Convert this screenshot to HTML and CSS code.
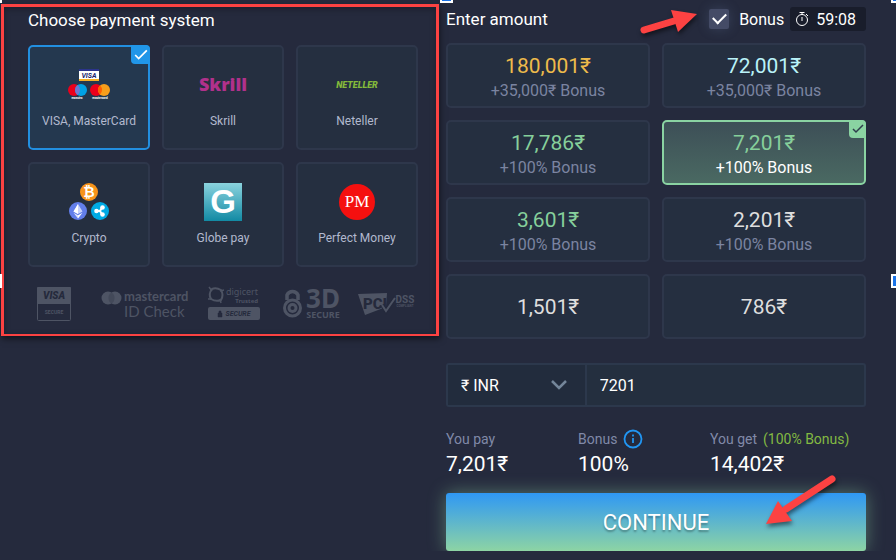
FILE: index.html
```
<!DOCTYPE html>
<html lang="en">
<head>
    <meta charset="utf-8">
    <title>Deposit</title>
    <link rel="stylesheet" href="styles.css">
</head>
<body>
    <span class="handle top-left"></span>
    <span class="handle top-center"></span>
    <span class="handle top-right"></span>
    <span class="handle middle-left"></span>
    <span class="handle middle-right"></span>

    <form class="deposit">
        <section class="payment">
            <h1>Choose payment system</h1>

            <div class="systems">
                <label class="system">
                    <input type="radio" name="system" value="card" checked>
                    <svg class="logo" width="44" height="40" viewBox="0 0 44 40">
                        <rect x="12" y="4" width="20" height="12" fill="#fff"/>
                        <rect x="12" y="4" width="20" height="2" fill="#2b348c"/>
                        <rect x="12" y="14" width="20" height="2" fill="#f5b027"/>
                        <text x="22" y="13" class="visa-text">VISA</text>
                        <circle cx="7" cy="25" r="6" fill="#eb001b"/>
                        <circle cx="14" cy="25" r="6" fill="#00a2e5"/>
                        <path d="M10.500 20.100a6 6 0 0 1 0 9.800a6 6 0 0 1 0-9.800z" fill="#7375cf"/>
                        <circle cx="29" cy="25" r="6" fill="#eb001b"/>
                        <circle cx="37" cy="25" r="6" fill="#f79e1b"/>
                        <path d="M33 20.500a6 6 0 0 1 0 9a6 6 0 0 1 0-9z" fill="#ff5f00"/>
                        <text x="10" y="34" class="tiny-text">maestro</text>
                        <text x="33" y="34" class="tiny-text">mastercard</text>
                    </svg>
                    <span>VISA, MasterCard</span>
                    <span class="tick"><svg width="14" height="12" viewBox="0 0 12 10"><path d="M1 5l3 3 7-7"/></svg></span>
                </label>
                <label class="system">
                    <input type="radio" name="system" value="skrill">
                    <svg class="logo" width="48" height="40" viewBox="0 0 48 40">
                        <text x="24" y="26" class="skrill-text">Skrill</text>
                    </svg>
                    <span>Skrill</span>
                </label>
                <label class="system">
                    <input type="radio" name="system" value="neteller">
                    <svg class="logo" width="48" height="40" viewBox="0 0 48 40">
                        <text x="24" y="23" class="neteller-text">NETELLER</text>
                    </svg>
                    <span>Neteller</span>
                </label>
                <label class="system">
                    <input type="radio" name="system" value="crypto">
                    <svg class="logo" width="44" height="40" viewBox="0 0 44 40">
                        <circle cx="22" cy="10" r="9" fill="#f7931a"/>
                        <text x="22" y="15" class="btc-text">₿</text>
                        <circle cx="11" cy="29" r="9" fill="#627eea"/>
                        <path d="M11 22l4.500 7.500-4.500 2.500-4.500-2.500z" fill="#c9d3fa"/>
                        <path d="M11 22v10l-4.500-2.500zM11 33.200l4.500-2.500L11 36.500z" fill="#fff"/>
                        <path d="M11 33.200l-4.500-2.500L11 36.500z" fill="#e4e9fd"/>
                        <circle cx="33" cy="29" r="9" fill="#00aae4"/>
                        <path d="M30 29h3l2-3.500M33 29l2 3.500" stroke="#fff" stroke-width="2" fill="none"/>
                        <circle cx="29.500" cy="29" r="2.300" fill="#fff"/>
                        <circle cx="35.500" cy="25.500" r="2.300" fill="#fff"/>
                        <circle cx="35.500" cy="32.500" r="2.300" fill="#fff"/>
                    </svg>
                    <span>Crypto</span>
                </label>
                <label class="system">
                    <input type="radio" name="system" value="globe">
                    <svg class="logo" width="38" height="40" viewBox="0 0 38 40">
                        <defs>
                            <linearGradient id="globe" x2="0" y2="1">
                                <stop offset="0" stop-color="#8bd3de"/>
                                <stop offset="1" stop-color="#128aa4"/>
                            </linearGradient>
                        </defs>
                        <rect y="1" width="38" height="38" fill="url(#globe)"/>
                        <text x="19" y="31" class="globe-text">G</text>
                    </svg>
                    <span>Globe pay</span>
                </label>
                <label class="system">
                    <input type="radio" name="system" value="perfect">
                    <svg class="logo" width="36" height="40" viewBox="0 0 36 40">
                        <circle cx="18" cy="20" r="18" fill="#f5100f"/>
                        <text x="18" y="25" class="pm-text">PM</text>
                    </svg>
                    <span>Perfect Money</span>
                </label>
            </div>

            <div class="trust">
                <svg width="34" height="36" viewBox="0 0 34 36">
                    <rect x="0.500" y="1.500" width="33" height="33" rx="1" fill="none" stroke="#4e5464"/>
                    <rect y="1" width="34" height="17" rx="1" fill="#4e5464"/>
                    <text x="17" y="13" class="trust-visa">VISA</text>
                    <text x="17" y="28" class="trust-secure">SECURE</text>
                </svg>
                <svg class="mastercard" width="88" height="36" viewBox="0 0 88 36">
                    <circle cx="7" cy="12" r="6.500" fill="#4e5464"/>
                    <circle cx="14" cy="12" r="6.500" fill="#4e5464"/>
                    <path d="M10.500 6.500a6.500 6.500 0 0 1 0 11a6.500 6.500 0 0 1 0-11z" fill="#434959"/>
                    <text x="23" y="15" class="trust-mc">mastercard</text>
                    <text x="23" y="31" class="trust-id">ID Check</text>
                </svg>
                <svg width="54" height="36" viewBox="0 0 54 36">
                    <path d="M5 3q-4 5-1 10q5 3 10 1q3-5 0-10q-5-3-9-1z" fill="none" stroke="#4e5464" stroke-width="2"/>
                    <path d="M2 1l3 4M17 4l-4 1M14 17l-1-4M1 13l4 0" stroke="#4e5464" stroke-width="1.500"/>
                    <text x="51" y="9" class="trust-digi">digicert</text>
                    <text x="51" y="17" class="trust-trusted">Trusted</text>
                    <rect x="1" y="21" width="52" height="13" rx="2" fill="#4e5464"/>
                    <path d="M11 27h4v4h-4zM12 27v-2h2v2" fill="#252a3c" stroke="#252a3c" stroke-width="0.500"/>
                    <text x="31" y="30" class="trust-banner">SECURE</text>
                </svg>
                <svg width="60" height="36" viewBox="0 0 60 36">
                    <path d="M7 14V9a6 6 0 0 1 11 0v5" fill="none" stroke="#4e5464" stroke-width="3.500"/>
                    <circle cx="12.500" cy="22" r="8" fill="none" stroke="#4e5464" stroke-width="3"/>
                    <circle cx="12.500" cy="22" r="5" fill="#4e5464"/>
                    <circle cx="12.500" cy="22" r="2" fill="#252a3c"/>
                    <text x="43" y="22" class="trust-3d">3D</text>
                    <text x="43" y="32" class="trust-3ds">SECURE</text>
                </svg>
                <svg width="58" height="36" viewBox="0 0 58 36">
                    <path d="M0 8l29-1-1 14-21 8z" fill="#4e5464"/>
                    <text x="17" y="23" class="trust-pci">PCI</text>
                    <path d="M24 19l4 6 9-13" fill="none" stroke="#252a3c" stroke-width="4"/>
                    <path d="M24 19l4 6 9-13" fill="none" stroke="#4e5464" stroke-width="2"/>
                    <text x="47" y="17" class="trust-dss">DSS</text>
                    <text x="47" y="21" class="trust-compliant">COMPLIANT</text>
                </svg>
            </div>
        </section>

        <section class="amount">
            <header>
                <h2>Enter amount</h2>
                <label class="bonus">
                    <svg class="arrow arrow-bonus" width="62" height="34" viewBox="0 0 62 34">
                        <path d="M6 26L36 17" stroke="#fc4242" stroke-width="7" stroke-linecap="round"/>
                        <path d="M33 6l26 4-19 18z" fill="#fc4242"/>
                    </svg>
                    <input type="checkbox" checked>
                    <span>Bonus</span>
                </label>
                <div class="timer">
                    <svg width="14" height="16" viewBox="0 0 14 16" fill="none" stroke="#fff">
                        <circle cx="7" cy="9" r="5.500"/>
                        <path d="M4.500 1.500h5M7 2v2M7 6v4M11 3l2 2"/>
                    </svg>
                    <span>59:08</span>
                </div>
            </header>

            <div class="amounts">
                <label class="sum gold"><input type="radio" name="sum"><b>180,001₹</b><span>+35,000₹ Bonus</span></label>
                <label class="sum ice"><input type="radio" name="sum"><b>72,001₹</b><span>+35,000₹ Bonus</span></label>
                <label class="sum green"><input type="radio" name="sum"><b>17,786₹</b><span>+100% Bonus</span></label>
                <label class="sum green selected">
                    <input type="radio" name="sum" checked><b>7,201₹</b><span>+100% Bonus</span>
                    <i class="tick"><svg width="12" height="10" viewBox="0 0 12 10"><path d="M1 5l3 3 7-7"/></svg></i>
                </label>
                <label class="sum green"><input type="radio" name="sum"><b>3,601₹</b><span>+100% Bonus</span></label>
                <label class="sum"><input type="radio" name="sum"><b>2,201₹</b><span>+100% Bonus</span></label>
                <label class="sum"><input type="radio" name="sum"><b>1,501₹</b></label>
                <label class="sum"><input type="radio" name="sum"><b>786₹</b></label>
            </div>

            <div class="custom">
                <div class="currency">
                    <select aria-label="Currency">
                        <option>₹ INR</option>
                    </select>
                    <svg width="16" height="10" viewBox="0 0 16 10"><path d="M1 1l7 7 7-7" fill="none" stroke="#74869a" stroke-width="2.500"/></svg>
                </div>
                <input type="text" value="7201" aria-label="Amount">
            </div>

            <dl class="summary">
                <div>
                    <dt>You pay</dt>
                    <dd>7,201₹</dd>
                </div>
                <div>
                    <dt>Bonus
                        <svg width="20" height="20" viewBox="0 0 20 20">
                            <circle cx="10" cy="10" r="8.500" fill="none" stroke="#2196f3" stroke-width="1.800"/>
                            <path d="M10 9v5M10 5.500v2" stroke="#2196f3" stroke-width="1.800"/>
                        </svg>
                    </dt>
                    <dd>100%</dd>
                </div>
                <div>
                    <dt>You get <em>(100% Bonus)</em></dt>
                    <dd>14,402₹</dd>
                </div>
            </dl>

            <button type="submit">
                CONTINUE
                <svg class="arrow arrow-continue" width="80" height="60" viewBox="0 0 80 60">
                    <path d="M72 10L26 40" stroke="#fc4242" stroke-width="7" stroke-linecap="round"/>
                    <path d="M18 32l14 20-26 3z" fill="#fc4242"/>
                </svg>
            </button>
        </section>
    </form>
</body>
</html>
```
FILE: styles.css
```
* {
    box-sizing: border-box;
}

body {
    font-family: Roboto, 'Liberation Sans', sans-serif;
    background-color: #252a3d;
    color: #fff;
    margin: 0;
}

h1,
h2 {
    font-size: 17px;
    font-weight: normal;
    margin: 0;
    line-height: 24px;
}

h2 {
    margin-right: auto;
}

.deposit {
    display: grid;
    grid-template-columns: 438fr 420fr;
    gap: 7px;
    align-items: start;
    padding: 4px 30px 0 1px;
}

/* payment systems */
.payment {
    border: 3px solid #fc4242;
    border-width: 3px 3px 2px;
    padding: 1px 18px 12px 24px;
    box-shadow: 1px 3px 6px rgba(0, 0, 0, 0.5), inset 0 2px 6px rgba(0, 0, 0, 0.3);
}

.systems {
    display: grid;
    grid-template-columns: repeat(3, 1fr);
    gap: 12px;
    margin-top: 13px;
}

.system,
.sum {
    position: relative;
    display: flex;
    flex-direction: column;
    align-items: center;
    background-color: #252f40;
    border: 2px solid #2e374b;
    border-radius: 5px;
    cursor: pointer;
}

.system {
    height: 105px;
    padding-top: 18px;
    gap: 8px;
    font-size: 12px;
    line-height: 16px;
    color: #b2b9ce;
}

.system input,
.sum input {
    position: absolute;
    opacity: 0;
}

.system:has(input:checked) {
    background-color: #24384f;
    border-color: #228fe0;
}

.tick {
    position: absolute;
    top: -2px;
    right: -2px;
    width: 19px;
    height: 19px;
    display: flex;
    align-items: center;
    justify-content: center;
    background-color: #2196e8;
    border-radius: 0 4px 0 4px;
}

.tick path {
    fill: none;
    stroke: #fff;
    stroke-width: 1.5;
}

.logo text,
.trust text {
    text-anchor: middle;
    font-weight: bold;
}

.visa-text {
    font-size: 7px;
    font-style: italic;
    fill: #1a1f71;
}

.logo .tiny-text {
    font-size: 3px;
    fill: #fff;
}

.logo .skrill-text {
    font-family: 'Open Sans', sans-serif;
    font-size: 18px;
    font-weight: 800;
    fill: #b1318b;
}

.logo .neteller-text {
    font-size: 9px;
    font-style: italic;
    font-weight: 900;
    fill: #83ba3b;
}

.btc-text {
    font-size: 14px;
    fill: #fff;
}

.globe-text {
    font-family: 'Liberation Sans', sans-serif;
    font-size: 33px;
    fill: #fff;
}

.logo .pm-text {
    font-family: 'Liberation Serif', serif;
    font-size: 17px;
    font-weight: normal;
    fill: #fff;
}

/* trust badges */
.trust {
    display: flex;
    justify-content: space-between;
    margin: 19px 2px 0 9px;
}

.trust svg {
    overflow: visible;
}

.trust .mastercard {
    margin-left: 11px;
}

.trust text {
    fill: #4e5464;
}

.trust .trust-visa {
    font-size: 10px;
    font-style: italic;
    font-weight: 900;
    fill: #252a3c;
}

.trust-secure {
    font-size: 5px;
}

.trust .trust-mc {
    font-family: Lato, sans-serif;
    font-size: 13px;
    text-anchor: start;
}

.trust .trust-id {
    font-family: Lato, sans-serif;
    font-size: 15px;
    font-weight: normal;
    text-anchor: start;
}

.trust .trust-digi {
    font-family: 'Noto Sans', sans-serif;
    font-size: 9px;
    font-weight: normal;
    text-anchor: end;
}

.trust .trust-trusted {
    font-family: 'Noto Sans', sans-serif;
    font-size: 6px;
    text-anchor: end;
}

.trust .trust-banner {
    font-size: 7px;
    font-style: italic;
    fill: #252a3c;
}

.trust-3d {
    font-family: 'Noto Sans', sans-serif;
    font-size: 26px;
}

.trust-3ds {
    font-family: 'Noto Sans', sans-serif;
    font-size: 9px;
}

.trust .trust-pci {
    font-size: 15px;
    font-weight: 900;
    fill: #252a3c;
}

.trust-dss {
    font-size: 10px;
}

.trust-compliant {
    font-size: 3px;
}

/* amount */
.amount header {
    display: flex;
    align-items: center;
    height: 30px;
}

.bonus {
    position: relative;
    display: flex;
    align-items: center;
    gap: 10px;
    margin-right: 6px;
    font-size: 16px;
}

.bonus input {
    appearance: none;
    width: 20px;
    height: 20px;
    margin: 0;
    background-color: #444b66;
    border-radius: 2px;
    box-shadow: 0 0 12px rgba(100, 120, 160, 0.3);
    display: grid;
    place-items: center;
}

.bonus input:checked::before {
    content: '';
    width: 11px;
    height: 6px;
    border: solid #fff;
    border-width: 0 0 2px 2px;
    transform: translateY(-2px) rotate(-45deg);
}

.timer {
    display: flex;
    align-items: center;
    gap: 7px;
    height: 24px;
    padding: 0 10px 0 5px;
    background-color: #191d2b;
    border-radius: 3px;
    font-size: 16px;
}

.amounts {
    display: grid;
    grid-template-columns: 1fr 1fr;
    gap: 12px;
    margin-top: 9px;
}

.sum {
    height: 65px;
    justify-content: center;
    color: #dedede;
}

.sum:has(span) {
    padding-top: 5px;
}

.sum b {
    font-size: 21px;
    font-weight: normal;
    line-height: 26px;
}

.sum span {
    font-size: 16px;
    line-height: 24px;
    color: #7b84a1;
}

.gold {
    color: #eebb4b;
}

.ice {
    color: #b9f2f8;
}

.green {
    color: #86cf9b;
}

.selected {
    background: linear-gradient(#3d4f57, #4a6962);
    border-color: #8ad3a2;
}

.selected span {
    color: #fff;
}

.selected .tick {
    width: 17px;
    height: 18px;
    background-color: #8ad3a2;
}

.selected .tick path {
    stroke: #2f3e4c;
}

.custom {
    display: grid;
    grid-template-columns: 1fr 2fr;
    margin-top: 24px;
    border: 2px solid #2c384c;
    border-radius: 3px;
    background-color: #242f3f;
}

.currency {
    display: grid;
    align-items: center;
    border-right: 2px solid #2c384c;
    background-color: #222c3d;
}

.currency select,
.currency svg {
    grid-area: 1 / 1;
}

.currency svg {
    justify-self: end;
    margin-right: 18px;
    pointer-events: none;
}

.custom select,
.custom input {
    appearance: none;
    width: 100%;
    height: 40px;
    padding: 0 13px;
    border: none;
    background: none;
    color: #fff;
    font: 16px Roboto, sans-serif;
}

.summary {
    display: grid;
    grid-template-columns: 132px 132px 1fr;
    margin: 22px 0 0;
}

.summary dt {
    display: flex;
    align-items: center;
    gap: 6px;
    height: 20px;
    font-size: 14px;
    color: #8089a8;
}

.summary em {
    font-style: normal;
    color: #83b942;
}

.summary dd {
    margin: 0;
    padding-top: 2px;
    font-size: 21px;
    line-height: 26px;
}

button {
    position: relative;
    display: block;
    width: 100%;
    height: 58px;
    margin-top: 16px;
    border: none;
    border-radius: 3px;
    background: linear-gradient(#2f98f4, #8dd4a4);
    box-shadow: 0 0 18px rgba(141, 212, 164, 0.45);
    color: #fff;
    font: 22px Roboto, sans-serif;
    text-shadow: 0 2px 2px rgba(0, 0, 0, 0.3);
    cursor: pointer;
}

/* pointers and selection handles laid over the form */
.arrow {
    position: absolute;
    fill: none;
    filter: drop-shadow(1px 3px 2px rgba(0, 0, 0, 0.5));
    pointer-events: none;
}

.arrow-bonus {
    top: -5px;
    right: 84px;
}

.arrow-continue {
    top: -24px;
    right: 26px;
}

.handle {
    position: absolute;
    width: 5px;
    height: 3px;
    background-color: #fff;
}

.top-left,
.middle-left {
    left: 0;
    width: 2px;
}

.top-left,
.top-center,
.top-right {
    top: 0;
}

.top-center {
    left: 440px;
    width: 13px;
    border: solid #fff;
    border-width: 0 2px 2px;
    background-color: #1a73e8;
}

.top-right,
.middle-right {
    right: 0;
}

.middle-left,
.middle-right {
    top: 274px;
    height: 14px;
}

.top-right,
.middle-right {
    border: solid #fff;
    border-width: 0 0 2px 2px;
    background-color: #1a73e8;
}

.middle-right {
    border-top-width: 2px;
}
```
